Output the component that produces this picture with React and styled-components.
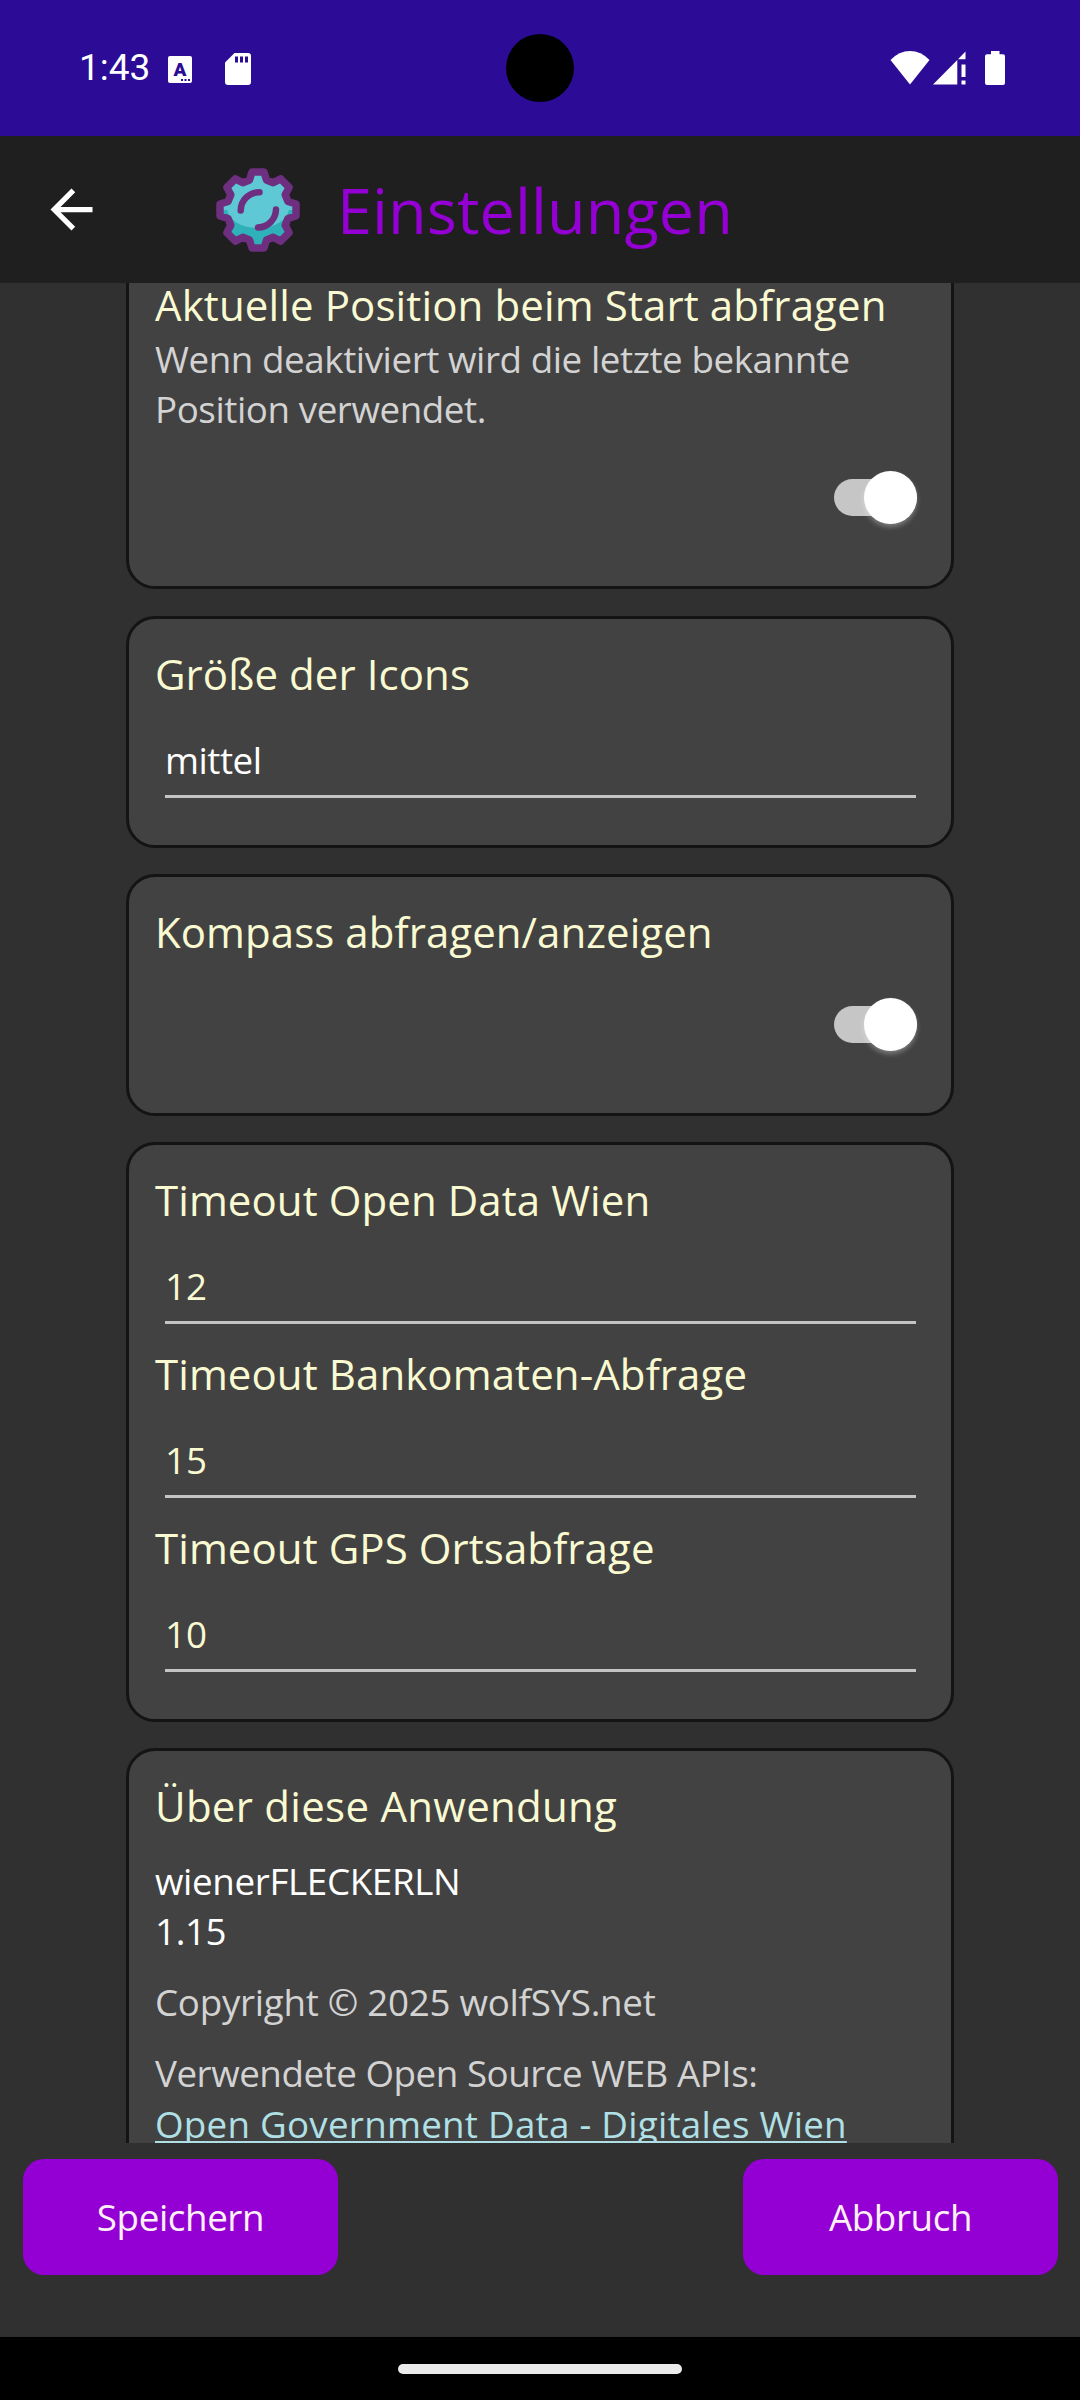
import React, { useState } from 'react';
import styled, { createGlobalStyle } from 'styled-components';

const GlobalStyle = createGlobalStyle`
  * {
    box-sizing: border-box;
  }

  body {
    margin: 0;
    background: #303030;
    font-family: 'Open Sans', sans-serif;
  }
`;

const timeouts = [
  { id: 'openData', label: 'Timeout Open Data Wien', value: '12' },
  { id: 'bankomat', label: 'Timeout Bankomaten-Abfrage', value: '15' },
  { id: 'gps', label: 'Timeout GPS Ortsabfrage', value: '10' },
];

// one tooth every 45 degrees, tip and foot on each side
const gearPoints = () => {
  const points = [];
  for (let i = 0; i < 8; i++) {
    const a = (i * Math.PI) / 4;
    [[-8.5, -30], [-6, -38], [6, -38], [8.5, -30]].forEach(([x, y]) => {
      const px = x * Math.cos(a) - y * Math.sin(a);
      const py = x * Math.sin(a) + y * Math.cos(a);
      points.push(`${px.toFixed(2)},${py.toFixed(2)}`);
    });
  }
  return points.join(' ');
};

const GearIcon = () => {
  const points = gearPoints();
  return (
    <svg width="84" height="84" viewBox="-42 -42 84 84">
      <clipPath id="gear">
        <polygon points={points} />
      </clipPath>
      <g clipPath="url(#gear)">
        <rect x="-42" y="-42" width="84" height="84" fill="#2fb1ba" />
        <rect x="-42" y="-42" width="84" height="42" fill="#5fc8d5" />
        <ellipse cx="0" cy="-2" rx="31" ry="20" fill="#5fc8d5" />
      </g>
      <g fill="none" stroke="#6f2f80" strokeLinejoin="round" strokeLinecap="round">
        <polygon points={points} strokeWidth="7.500" />
        <path d="M1.500 -17.800A18.500 18.500 0 0 0 -17.300 0.500" strokeWidth="6.500" />
        <path d="M18 -0.500A18.500 18.500 0 0 1 0 17.500" strokeWidth="6.500" />
      </g>
    </svg>
  );
};

const BackIcon = () => (
  <svg width="63" height="63" viewBox="0 0 24 24" fill="#fff">
    <path d="M20 11H7.830l5.590-5.590L12 4l-8 8 8 8 1.410-1.410L7.830 13H20v-2z" />
  </svg>
);

const KeyboardIcon = () => (
  <svg width="24" height="27" viewBox="0 0 24 27">
    <rect width="24" height="27" rx="2" fill="#fff" />
    <text x="12" y="20" textAnchor="middle" fontFamily="Roboto, sans-serif" fontWeight="900" fontSize="19" fill="#2c0b96">A</text>
    <path d="M13 23h2v2h-2zM16.500 23h2v2h-2zM20 23h2v2h-2z" fill="#2c0b96" />
  </svg>
);

const SdCardIcon = () => (
  <svg width="26" height="32" viewBox="0 0 26 32">
    <path d="M9.500 0H23a3 3 0 0 1 3 3v26a3 3 0 0 1-3 3H3a3 3 0 0 1-3-3V9.500z" fill="#fff" />
    <path d="M10 3.500h3v6h-3zM15 3.500h3v6h-3zM20 3.500h3v6h-3z" fill="#2c0b96" />
  </svg>
);

const WifiIcon = () => (
  <svg width="40" height="34" viewBox="0 0 40 34">
    <path d="M0.500 9Q9 0 20 0T39.500 9L20 33.500z" fill="#fff" />
  </svg>
);

const SignalIcon = () => (
  <svg width="33" height="34" viewBox="0 0 33 34" fill="#fff">
    <path d="M0 33.500L24.300 9v24.500zM25 8.300L32.500 0.500V8.300zM28.500 13.500h4V26h-4zM28.500 29.500h4v4h-4z" />
  </svg>
);

const BatteryIcon = () => (
  <svg width="20" height="34" viewBox="0 0 20 34" fill="#fff">
    <path d="M6 0h8.500v3.300H18a2 2 0 0 1 2 2V32a2 2 0 0 1-2 2H2a2 2 0 0 1-2-2V5.300a2 2 0 0 1 2-2h4z" />
  </svg>
);

const Switch = ({ defaultOn }) => {
  const [on, setOn] = useState(defaultOn);
  return (
    <SwitchRow>
      <Track type="button" role="switch" aria-checked={on} onClick={() => setOn(!on)}>
        <Thumb $on={on} />
      </Track>
    </SwitchRow>
  );
};

const Entry = ({ label, value, color, spacing }) => (
  <Group>
    <Heading $spacing="0.08px">{label}</Heading>
    <Field $color={color} $spacing={spacing}>{value}</Field>
  </Group>
);

const App = () => {
  return (
    <Screen>
      <GlobalStyle />
      <StatusBar>
        <Clock>1:43</Clock>
        <Notifications>
          <KeyboardIcon />
          <SdCardIcon />
        </Notifications>
        <System>
          <WifiIcon />
          <SignalIcon />
          <BatteryIcon />
        </System>
        <Camera />
      </StatusBar>

      <AppBar>
        <BackSlot>
          <BackIcon />
        </BackSlot>
        <GearSlot>
          <GearIcon />
        </GearSlot>
        <Title>Einstellungen</Title>
      </AppBar>

      <Content>
        <Card $first>
          <Heading>Aktuelle Position beim Start abfragen</Heading>
          <Text>Wenn deaktiviert wird die letzte bekannte Position verwendet.</Text>
          <Switch defaultOn />
        </Card>

        <Card>
          <Entry label="Größe der Icons" value="mittel" color="#fff" spacing="-0.5px" />
        </Card>

        <Card>
          <Heading $spacing="0.06px">Kompass abfragen/anzeigen</Heading>
          <Switch defaultOn />
        </Card>

        <Card>
          {timeouts.map((t) => (
            <Entry key={t.id} label={t.label} value={t.value} color="#fafad2" />
          ))}
        </Card>

        <Card>
          <Heading $spacing="0.28px">Über diese Anwendung</Heading>
          <Paragraph $color="#fff" $spacing="-0.36px">
            wienerFLECKERLN
            <br />
            1.15
          </Paragraph>
          <Paragraph $spacing="-0.28px">Copyright © 2025 wolfSYS.net</Paragraph>
          <Paragraph $spacing="-0.47px">Verwendete Open Source WEB APIs:</Paragraph>
          <LinkLine>
            <Link>Open Government Data - Digitales Wien</Link>
          </LinkLine>
        </Card>
      </Content>

      <Footer>
        <Button type="button">Speichern</Button>
        <Button type="button">Abbruch</Button>
      </Footer>

      <NavBar>
        <Handle />
      </NavBar>
    </Screen>
  );
};

const Screen = styled.div`
  width: 1080px;
  height: 2400px;
  display: flex;
  flex-direction: column;
  overflow: hidden;
  background: #303030;
`;

const StatusBar = styled.header`
  position: relative;
  flex: none;
  height: 136px;
  padding: 0 75px 0 79px;
  display: flex;
  align-items: center;
  background: #2c0b96;
  color: #fff;

  svg {
    display: block;
  }
`;

const Clock = styled.span`
  width: 89px;
  font-family: Roboto, sans-serif;
  font-size: 37px;
  line-height: 44px;
`;

const Notifications = styled.div`
  display: flex;
  align-items: center;
  gap: 33px;
  padding-top: 2px;
`;

const System = styled.div`
  display: flex;
  align-items: center;
  margin-left: auto;

  svg + svg {
    margin-left: 3px;
  }

  svg:last-child {
    margin-left: 19px;
  }
`;

// camera cut-out lies over the status bar
const Camera = styled.div`
  position: absolute;
  top: 34px;
  left: 506px;
  width: 68px;
  height: 68px;
  border-radius: 50%;
  background: #000;
`;

const AppBar = styled.div`
  flex: none;
  height: 147px;
  padding-left: 40px;
  display: flex;
  align-items: center;
  background: #1f1f1f;

  svg {
    display: block;
  }
`;

const BackSlot = styled.div`
  padding-bottom: 1px;
`;

const GearSlot = styled.div`
  margin-left: 113px;
`;

const Title = styled.h1`
  margin: 0 0 0 37px;
  font-size: 63px;
  font-weight: 400;
  line-height: 86px;
  letter-spacing: 0.1px;
  color: #9400d3;
`;

const Content = styled.main`
  flex: none;
  height: 1860px;
  padding: 0 126px;
  display: flex;
  flex-direction: column;
  gap: 26px;
  overflow: hidden;
`;

const Card = styled.section`
  flex: none;
  width: 828px;
  margin: ${(p) => (p.$first ? '-36px 0 1px' : '0')};
  padding: 26px;
  border: 3px solid #141414;
  border-radius: 29px;
  background: #424242;
`;

const Group = styled.div`
  height: 174px;
`;

const Heading = styled.h2`
  margin: 0;
  padding-bottom: 1px;
  font-size: 42px;
  font-weight: 400;
  line-height: 57px;
  letter-spacing: ${(p) => p.$spacing || '0.12px'};
  color: #fafad2;
`;

const Text = styled.p`
  margin: 0;
  font-size: 36.75px;
  line-height: 50px;
  letter-spacing: ${(p) => p.$spacing || '-0.43px'};
  color: ${(p) => p.$color || '#d3d3d3'};
`;

const Paragraph = styled(Text)`
  margin-top: 21px;
`;

const LinkLine = styled(Text)`
  margin-top: 1px;
`;

const Link = styled.span`
  letter-spacing: 0.25px;
  color: #b0e0e6;
  text-decoration: underline;
  text-decoration-thickness: 2px;
  text-decoration-skip-ink: none;
  text-underline-offset: 3px;
`;

const Field = styled.div`
  height: 95px;
  margin: 0 9px 0 10px;
  padding-top: 32px;
  border-bottom: 3px solid #c4c4c4;
  font-size: 36.75px;
  line-height: 50px;
  letter-spacing: ${(p) => p.$spacing || '0'};
  color: ${(p) => p.$color};
`;

const SwitchRow = styled.div`
  display: flex;
  justify-content: flex-end;
  padding: 45px 8px 44px 0;
`;

const Track = styled.button`
  width: 83px;
  height: 37px;
  padding: 0;
  display: flex;
  align-items: center;
  border: 0;
  border-radius: 19px;
  background: #c6c6c6;
`;

const Thumb = styled.span`
  flex: none;
  width: 53px;
  height: 53px;
  margin-left: ${(p) => (p.$on ? '30px' : '0')};
  border-radius: 50%;
  background: #fff;
  box-shadow: 0 3px 5px rgba(255, 255, 255, 0.3);
`;

const Footer = styled.footer`
  flex: none;
  height: 194px;
  padding: 16px 22px 0 23px;
  display: flex;
  justify-content: space-between;
  align-items: flex-start;
`;

const Button = styled.button`
  width: 315px;
  height: 116px;
  padding: 0;
  border: 0;
  border-radius: 21px;
  background: #9400d3;
  font-family: inherit;
  font-size: 36.75px;
  letter-spacing: -0.4px;
  color: #fff0f5;
`;

const NavBar = styled.div`
  flex: none;
  height: 63px;
  display: flex;
  align-items: center;
  justify-content: center;
  background: #000;
`;

const Handle = styled.div`
  width: 284px;
  height: 10px;
  border-radius: 5px;
  background: #ebebeb;
`;

export default App;
